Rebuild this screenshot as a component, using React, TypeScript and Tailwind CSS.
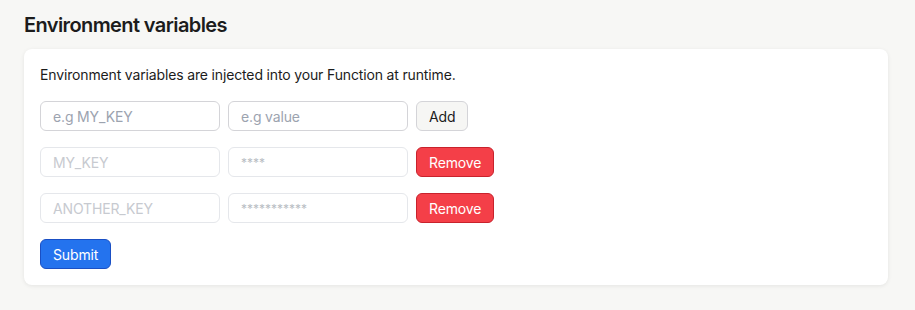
import { useState } from 'react';

type EnvVar = { key: string; value: string };

export default function App() {
  const [vars, setVars] = useState<EnvVar[]>([
    { key: 'MY_KEY', value: '****' },
    { key: 'ANOTHER_KEY', value: '***********' },
  ]);
  const [newKey, setNewKey] = useState('');
  const [newValue, setNewValue] = useState('');

  const add = () => {
    if (!newKey.trim()) return;
    setVars([...vars, { key: newKey, value: newValue.replace(/./g, '*') }]);
    setNewKey('');
    setNewValue('');
  };

  return (
    <div
      className="min-h-[310px] bg-[#f7f7f5] pl-6 pt-[11px] text-[#1c1c1c]"
      style={{ fontFamily: 'Inter, "Noto Sans", sans-serif' }}
    >
      <h2 className="text-[20px] font-semibold leading-7 tracking-[-0.6px]">Environment variables</h2>

      <div className="mt-[10px] w-[864px] rounded-lg bg-white p-4 shadow-[0_1px_4px_rgba(0,0,0,0.08)]">
        <p className="text-[14px] leading-5 tracking-[-0.15px]">
          Environment variables are injected into your Function at runtime.
        </p>

        {/* New entry */}
        <div className="mt-4 flex gap-2">
          <input
            value={newKey}
            onChange={(e) => setNewKey(e.target.value)}
            placeholder="e.g MY_KEY"
            className="h-[30px] w-[180px] rounded-md border border-[#d4d4d8] px-3 text-[14px] tracking-[-0.15px] placeholder:text-[#9ca3af] focus:outline-none"
          />
          <input
            value={newValue}
            onChange={(e) => setNewValue(e.target.value)}
            placeholder="e.g value"
            className="h-[30px] w-[180px] rounded-md border border-[#d4d4d8] px-3 text-[14px] tracking-[-0.15px] placeholder:text-[#9ca3af] focus:outline-none"
          />
          <button
            onClick={add}
            className="h-[30px] rounded-md border border-[#d4d4d8] bg-[#f6f6f4] px-3 text-[14px] tracking-[-0.15px] text-[#1c1c1c]"
          >
            Add
          </button>
        </div>

        {/* Existing entries */}
        {vars.map((v, i) => (
          <div key={i} className="mt-4 flex gap-2">
            <input
              disabled
              value={v.key}
              className="h-[30px] w-[180px] rounded-md border border-[#e5e7eb] bg-white px-3 text-[14px] tracking-[-0.15px] text-[#c7cad0]"
            />
            <input
              disabled
              value={v.value}
              className="h-[30px] w-[180px] rounded-md border border-[#e5e7eb] bg-white px-3 text-[12px] text-[#b8bcc3]"
            />
            <button
              onClick={() => setVars(vars.filter((_, j) => j !== i))}
              className="h-[30px] rounded-md border border-[#c8222c] bg-[#f43f48] px-3 text-[14px] tracking-[-0.15px] text-white"
            >
              Remove
            </button>
          </div>
        ))}

        <button className="mt-4 h-[30px] rounded-md border border-[#1a4fc4] bg-[#2473ee] px-3 text-[14px] tracking-[-0.15px] text-white">
          Submit
        </button>
      </div>
    </div>
  );
}
